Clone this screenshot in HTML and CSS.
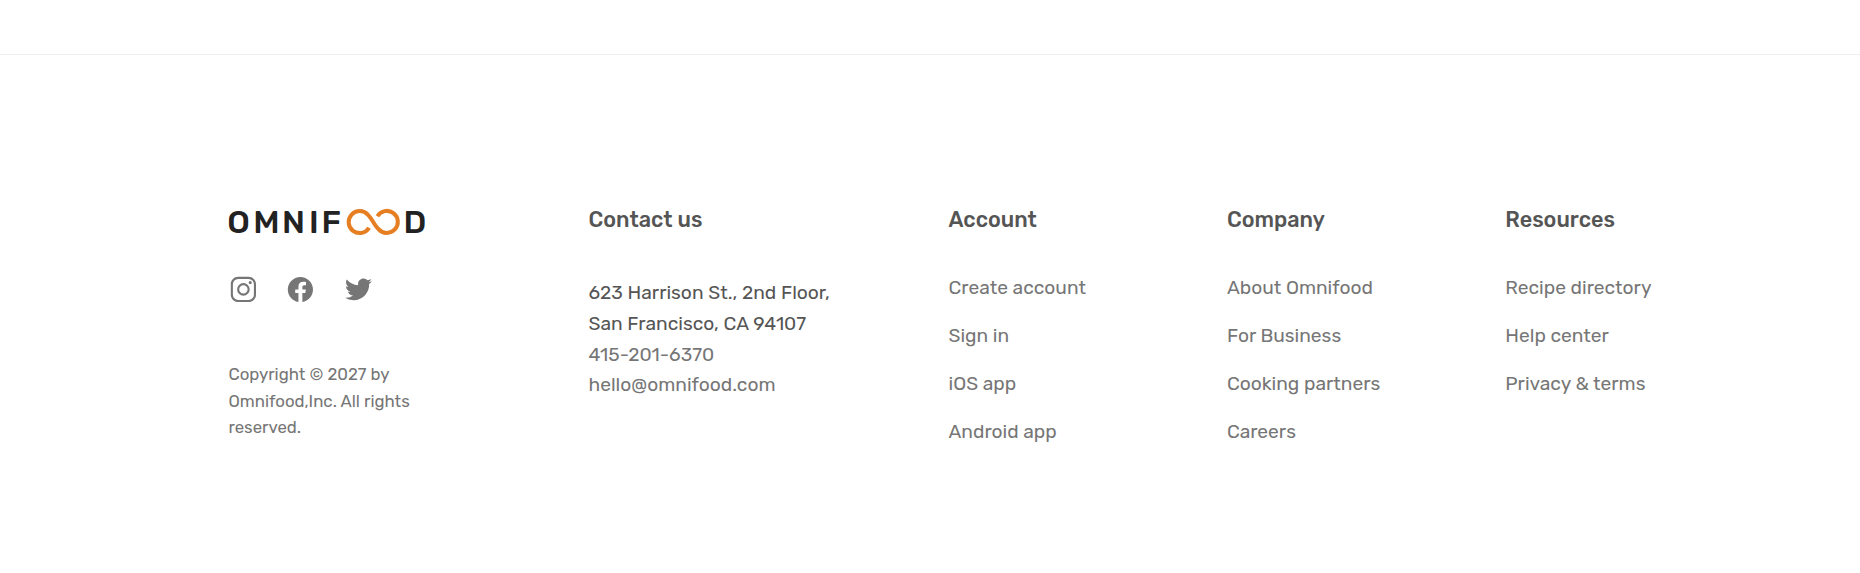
FILE: index.html
```html
<!DOCTYPE html>
<html lang="en">
<head>
<meta charset="utf-8">
<title>Omnifood</title>
<link rel="stylesheet" href="styles.css">
</head>
<body>
<footer class="footer">
  <div class="grid">
    <div class="col">
      <a class="logo" href="#" aria-label="Omnifood">
        <svg class="logo-mark" viewBox="0 0 200 32" width="200" height="32">
          <g class="logo-text">
            <text x="-1.700" y="27.300">O</text>
            <text x="24.200" y="27.300">M</text>
            <text x="53" y="27.300">N</text>
            <text x="79.900" y="27.300">I</text>
            <text x="92.400" y="27.300">F</text>
            <text x="174.500" y="27.300">D</text>
          </g>
          <path class="logo-loop" transform="translate(-0.600 0)" d="M140.700 21.700A11 11 0 1 1 139.600 8.900C143.500 12.500 146 19.500 150.100 23.100A11 11 0 1 0 149 10.200"/>
        </svg>
      </a>
      <div class="social">
        <svg class="icon" viewBox="0 0 512 512"><path d="M349.330 69.330a93.620 93.620 0 0 1 93.340 93.340v186.660a93.620 93.620 0 0 1-93.340 93.340H162.670a93.620 93.620 0 0 1-93.340-93.340V162.670a93.620 93.620 0 0 1 93.340-93.340h186.660m0-37.330H162.670C90.800 32 32 90.800 32 162.670v186.660C32 421.200 90.800 480 162.670 480h186.660C421.200 480 480 421.200 480 349.330V162.670C480 90.800 421.200 32 349.330 32z"/><path d="M377.330 162.670a28 28 0 1 1 28-28 27.940 27.940 0 0 1-28 28zM256 181.330A74.670 74.670 0 1 1 181.330 256 74.750 74.750 0 0 1 256 181.330m0-37.330a112 112 0 1 0 112 112 112 112 0 0 0-112-112z"/></svg>
        <svg class="icon" viewBox="0 0 512 512"><path fill-rule="evenodd" d="M480 257.350c0-123.700-100.300-224-224-224s-224 100.300-224 224c0 111.800 81.900 204.470 189 221.290V322.120h-56.890v-64.770H221V208c0-56.130 33.450-87.160 84.610-87.160 24.510 0 50.150 4.380 50.150 4.380v55.130H327.500c-27.810 0-36.510 17.260-36.510 35v42h62.120l-9.920 64.770H291v156.540c107.100-16.810 189-109.480 189-221.310z"/></svg>
        <svg class="icon" viewBox="0 0 512 512"><path d="M496 109.500a201.800 201.800 0 0 1-56.550 15.300 97.510 97.510 0 0 0 43.330-53.600 197.740 197.740 0 0 1-62.560 23.500A99.140 99.140 0 0 0 348.310 64c-54.420 0-98.460 43.400-98.460 96.900a93.210 93.210 0 0 0 2.540 22.100 280.700 280.700 0 0 1-203-101.300A95.690 95.690 0 0 0 36 130.400c0 33.600 17.530 63.300 44 80.700A97.500 97.500 0 0 1 35.220 199v1.200c0 47 34 86.100 79 95a100.760 100.760 0 0 1-25.940 3.400 94.380 94.380 0 0 1-18.510-1.800c12.510 38.500 48.920 66.500 92.050 67.300A199.590 199.590 0 0 1 39.500 405.600a203 203 0 0 1-23.500-1.400A278.680 278.680 0 0 0 166.740 448c181.360 0 280.440-147.700 280.440-275.800 0-4.200-.11-8.400-.31-12.500A198.480 198.480 0 0 0 496 109.500z"/></svg>
      </div>
      <p class="copy">Copyright © 2027 by Omnifood,Inc. All rights reserved.</p>
    </div>
    <div class="col">
      <p class="heading">Contact us</p>
      <address class="contact">623 Harrison St., 2nd Floor,<br>San Francisco, CA 94107<br><a href="#">415-201-6370</a><br><a href="#">hello@omnifood.com</a></address>
    </div>
    <nav class="col">
      <p class="heading">Account</p>
      <ul class="links">
        <li><a href="#">Create account</a></li>
        <li><a href="#">Sign in</a></li>
        <li><a href="#">iOS app</a></li>
        <li><a href="#">Android app</a></li>
      </ul>
    </nav>
    <nav class="col">
      <p class="heading">Company</p>
      <ul class="links">
        <li><a href="#">About Omnifood</a></li>
        <li><a href="#">For Business</a></li>
        <li><a href="#">Cooking partners</a></li>
        <li><a href="#">Careers</a></li>
      </ul>
    </nav>
    <nav class="col">
      <p class="heading">Resources</p>
      <ul class="links">
        <li><a href="#">Recipe directory</a></li>
        <li><a href="#">Help center</a></li>
        <li><a href="#">Privacy &amp; terms</a></li>
      </ul>
    </nav>
  </div>
</footer>
</body>
</html>
```
FILE: styles.css
```css
* { margin: 0; padding: 0; box-sizing: border-box; }
body { font-family: Rubik, Roboto, sans-serif; color: #555; background: #fff; padding-top: 54px; }
.footer { border-top: 1px solid #eee; padding: 151px 0 0 228.500px; }
.grid { display: grid; grid-template-columns: 245px 245px 163.400px 163.400px 163.400px; column-gap: 115px; }
.col { white-space: nowrap; }
.logo { display: block; height: 32px; }
.logo-mark { display: block; overflow: visible; }
.logo-text { font-size: 32.500px; font-weight: 500; fill: #222; }
.logo-loop { fill: none; stroke: #e67e22; stroke-width: 4; }
.social { display: flex; gap: 28.800px; margin-top: 37px; }
.icon { width: 28.800px; height: 28.800px; fill: #767676; }
.copy { width: 200px; margin-top: 57.200px; font-size: 16.800px; line-height: 26.600px; color: #767676; white-space: normal; }
.heading { font-size: 21.600px; font-weight: 500; line-height: 28px; }
.contact { margin-top: 44.200px; font-style: normal; font-size: 19.200px; line-height: 30.720px; }
.links { list-style: none; display: flex; flex-direction: column; gap: 20px; margin-top: 40px; }
.links li { font-size: 19.200px; line-height: 28px; }
a { color: #767676; text-decoration: none; }
```
